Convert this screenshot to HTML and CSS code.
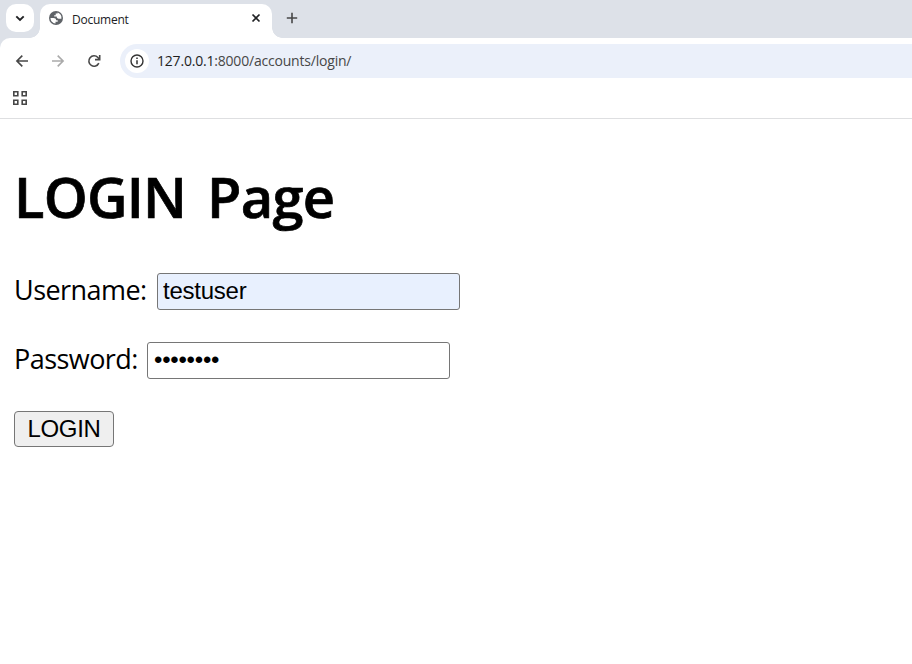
FILE: index.html
```html
<!DOCTYPE html>
<html lang="en">
<head>
<meta charset="utf-8">
<title>Document</title>
<link rel="stylesheet" href="styles.css">
</head>
<body>
<header class="browser">
  <div class="tabstrip">
    <button class="tab-search" type="button"><svg width="28" height="28" viewBox="0 0 28 28"><path d="M10.3 12.3 14 16l3.7-3.7" fill="none" stroke="#202124" stroke-width="1.9"/></svg></button>
    <div class="tab">
      <svg class="globe" width="14" height="14" viewBox="0 0 14 14"><circle cx="7" cy="7" r="7" fill="#5f6368"/><path d="M1.500 7h3c1.700 0 2.600.8 2.600 2.300h1.600v1.500H6.500v1.700C3.600 12.200 1.500 9.800 1.500 7ZM8.600 1.600v.9H6.700v1.700H5.200v1.300h2.500c0 1.400.7 2.200 2 2.200h2.700c.5-2.900-1.200-5.300-3.800-6.100Z" fill="#fff"/></svg>
      <span class="tab-title">Document</span>
      <svg class="close" width="10" height="10" viewBox="0 0 10 10"><path d="m1.500 1.500 7 7m0-7-7 7" stroke="#202124" stroke-width="1.700"/></svg>
    </div>
    <svg class="new-tab" width="12" height="12" viewBox="0 0 12 12"><path d="M6 .8v10.400M.8 6h10.400" stroke="#474747" stroke-width="1.600"/></svg>
  </div>
  <div class="toolbar">
    <svg width="16" height="16" viewBox="0 0 16 16"><path d="M14 8H3m5.300-5.400L2.900 8l5.400 5.400" fill="none" stroke="#474747" stroke-width="1.600"/></svg>
    <svg width="16" height="16" viewBox="0 0 16 16"><path d="M2 8h11M7.700 2.600 13.100 8l-5.400 5.400" fill="none" stroke="#aaa" stroke-width="1.600"/></svg>
    <svg width="16" height="16" viewBox="0 0 16 16"><path d="M12.800 10.100A5.200 5.200 0 1 1 11.900 4.500L13.400 6M13.700 2v4.600H9" fill="none" stroke="#474747" stroke-width="1.600"/></svg>
    <div class="omnibox">
      <span class="site-info"><svg width="14" height="14" viewBox="0 0 14 14"><circle cx="7" cy="7" r="6" fill="none" stroke="#333" stroke-width="1.400"/><path d="M7 6.200v4M7 3.600v1.500" stroke="#333" stroke-width="1.500"/></svg></span>
      <span class="url"><span class="host">127.0.0.1</span>:8000/accounts/login/</span>
    </div>
  </div>
  <div class="bookmarks">
    <svg width="14" height="14" viewBox="0 0 14 14"><path d="M.8.8h4v4h-4zM9.200.8h4v4h-4zM.8 9.200h4v4h-4zM9.200 9.200h4v4h-4z" fill="none" stroke="#474747" stroke-width="1.600"/></svg>
  </div>
</header>
<main class="page">
  <h1 class="heading"><span class="heading-first">LOGIN</span><span class="heading-second">Page</span></h1>
  <form class="form">
    <div class="row"><label class="label label-user" for="u">Username:</label><input class="field autofilled" id="u" type="text" value="testuser"></div>
    <div class="row"><label class="label label-pass" for="p">Password:</label><input class="field secret" id="p" type="password" value="password"></div>
    <button class="submit" type="button">LOGIN</button>
  </form>
</main>
</body>
</html>
```
FILE: styles.css
```css
* { box-sizing: border-box; }
body { margin: 0; height: 664px; overflow: hidden; background: #fff; color: #000; font-family: "Open Sans", "Noto Sans", sans-serif; }
svg { display: block; flex: none; }
.browser { height: 119px; border-bottom: 1px solid #dedfe1; background: #dde1e8; }
.tabstrip { display: flex; height: 38px; padding: 4px 0 0 6px; }
.tab-search { width: 28px; height: 28px; padding: 0; border: 0; border-radius: 10px; background: #fff; }
.tab { position: relative; display: flex; width: 232px; height: 34px; margin-left: 6px; padding: 0 11px 5px 9px; align-items: center; border-radius: 10px 10px 0 0; background: #fff; }
.tab::before, .tab::after { content: ""; position: absolute; bottom: 0; width: 10px; height: 10px; }
.tab::before { left: -10px; background: radial-gradient(circle at 0 0, transparent 9.5px, #fff 10px); }
.tab::after { right: -10px; background: radial-gradient(circle at 100% 0, transparent 9.5px, #fff 10px); }
.globe { position: relative; top: -1px; }
.close { position: relative; top: -1px; margin-left: auto; }
.tab-title { margin-left: 9px; padding-top: 2px; font-size: 12px; line-height: 18px; color: #202124; letter-spacing: -0.25px; }
.new-tab { margin: 8px 0 0 14px; }
.toolbar { display: flex; height: 46px; padding-left: 14px; gap: 20px; align-items: center; background: #fff; border-radius: 10px 0 0 0; }
.omnibox { display: flex; flex: 1; height: 34px; margin-left: -2px; padding-left: 5px; align-items: center; border-radius: 17px 0 0 17px; background: #ebf0fa; }
.site-info { display: flex; width: 24px; height: 24px; align-items: center; justify-content: center; border-radius: 50%; background: #fff; }
.url { margin-left: 8px; font-size: 14px; line-height: 20px; color: #474747; letter-spacing: -0.2px; }
.host { color: #1f1f1f; }
.bookmarks { height: 34px; padding: 7px 0 0 13px; background: #fff; }
.page { padding: 39px 14px 0; }
.heading { display: flex; margin: 0; height: 76px; font-size: 56px; line-height: 76px; font-weight: 600; -webkit-text-stroke: 0.7px #000; }
.heading-first { width: 193px; letter-spacing: -0.8px; }
.heading-second { letter-spacing: -0.7px; }
.form { display: flex; flex-direction: column; align-items: flex-start; margin-top: 39px; }
.row { display: flex; height: 37px; margin-bottom: 32px; }
.label { font-size: 27px; line-height: 34px; letter-spacing: -0.55px; white-space: nowrap; }
.label-user { width: 143px; }
.label-pass { width: 133px; }
.field { width: 303px; height: 37px; padding: 0 5px 2px; border: 1px solid #767676; border-radius: 3px; background: #fff; color: #000; font: 24px/33px "Liberation Sans", sans-serif; letter-spacing: -0.25px; }
.autofilled { background: #e8f0fe; }
.secret { padding-left: 6px; }
.submit { width: 100px; height: 36px; padding: 0; border: 1px solid #767676; border-radius: 4px; background: #efefef; color: #000; font: 24px/34px "Liberation Sans", sans-serif; letter-spacing: -0.3px; }
```
